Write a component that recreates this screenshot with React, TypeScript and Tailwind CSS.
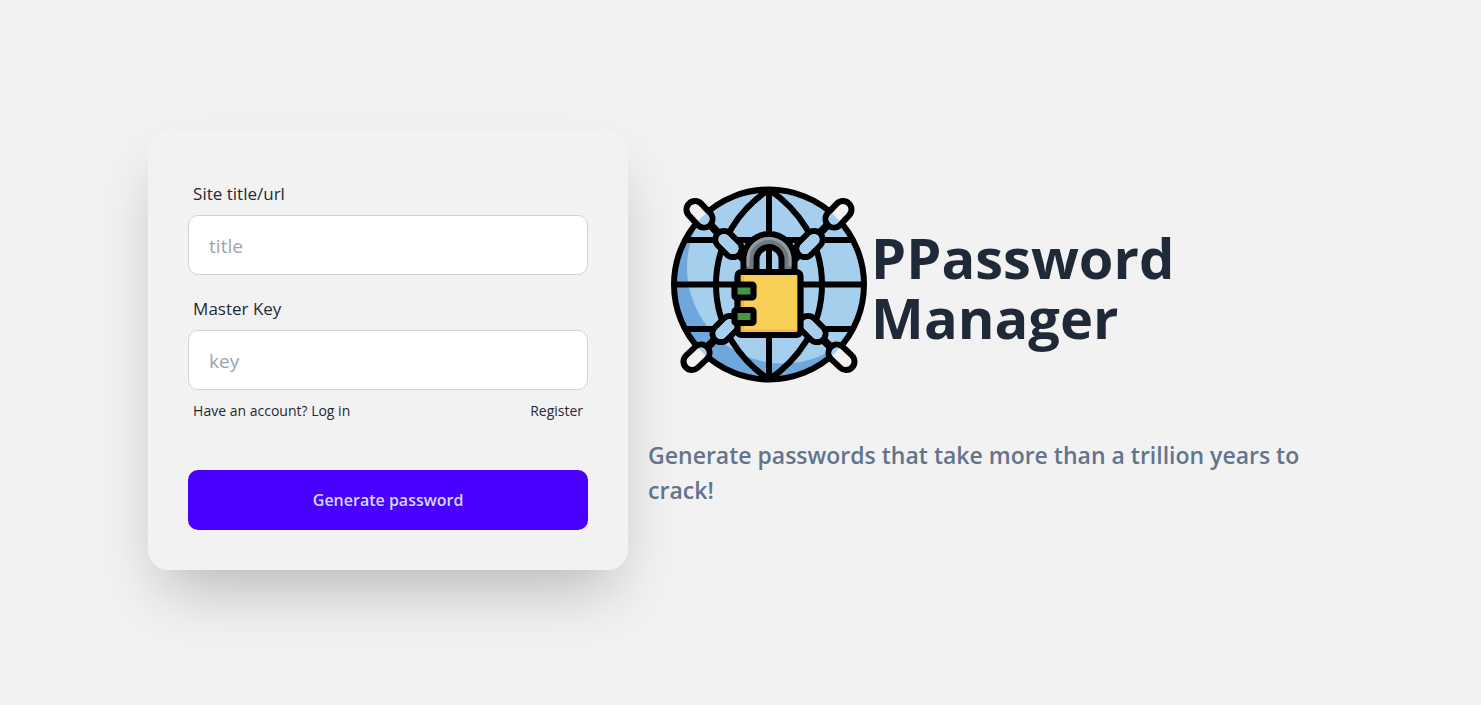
import React from "react";

type Point = [number, number];

const links: { id: string; from: Point; to: Point }[] = [
  { id: "top-left-outer", from: [-74, -75], to: [-65, -65.5] },
  { id: "top-left-inner", from: [-45, -45], to: [-36, -36] },
  { id: "top-right-outer", from: [74, -75], to: [65, -65.5] },
  { id: "top-right-inner", from: [45, -45], to: [36, -36] },
  { id: "bottom-left-outer", from: [-77, 77], to: [-68, 68.5] },
  { id: "bottom-left-inner", from: [-48, 49], to: [-39, 40] },
  { id: "bottom-right-outer", from: [77, 77], to: [68, 68.5] },
  { id: "bottom-right-inner", from: [48, 49], to: [39, 40] },
];

function Links({ width, color }: { width: number; color: string }) {
  return (
    <g stroke={color} strokeWidth={width} strokeLinecap="round">
      {links.map(({ id, from, to }) => (
        <line key={id} x1={from[0]} y1={from[1]} x2={to[0]} y2={to[1]} />
      ))}
    </g>
  );
}

function GlobeLock() {
  return (
    <svg viewBox="-121 -112.5 223 226" className="h-[226px] w-[223px] shrink-0" fill="none" role="img" aria-label="Chained globe with a padlock">
      <defs>
        <clipPath id="globe">
          <circle r="95" />
        </clipPath>
      </defs>
      <circle r="95" fill="#6fa6dc" />
      <circle cx="14" cy="-17" r="96" fill="#a6cfee" clipPath="url(#globe)" />
      <g stroke="#000" strokeWidth="6">
        <circle r="95" />
        <path d="M0-95V95M-95 0H95M-84-44.5H84M-84 44.5H84" />
        <path d="M0-95C-28-76-53-44-53 0S-28 76 0 95M0-95C28-76 53-44 53 0S28 76 0 95" />
        <path d="M-62-63L-25-25M62-63L25-25M-62 63L-30 31M62 63L30 31" strokeWidth="8" />
      </g>
      <Links width={23} color="#000" />
      <Links width={11} color="#f2f2f2" />
      <g clipPath="url(#globe)">
        <Links width={11} color="#a6cfee" />
      </g>
      <path d="M-19-12V-25A19 19 0 0 1 19-25V-12" stroke="#000" strokeWidth="19" />
      <path d="M-19-12V-25A19 19 0 0 1 19-25V-12" stroke="#6f7980" strokeWidth="7" />
      <path d="M-21-18V-25A21 21 0 0 1 21-25V-18" stroke="#959a9f" strokeWidth="3" />
      <rect x="-31.5" y="-12.5" width="63" height="63" rx="4" fill="#f8d057" />
      <path d="M-29-11V49H29V45H-25V-11Z" fill="#f5b544" />
      <rect x="-31.5" y="-12.5" width="63" height="63" rx="4" stroke="#000" strokeWidth="6.2" />
      <rect x="-34.5" y="0" width="19" height="13" rx="1.5" fill="#459644" stroke="#000" strokeWidth="6.2" />
      <rect x="-34.5" y="25.5" width="19" height="13" rx="1.5" fill="#459644" stroke="#000" strokeWidth="6.2" />
    </svg>
  );
}

function Field({ id, label, placeholder, type }: { id: string; label: string; placeholder: string; type: string }) {
  return (
    <div className="flex flex-col">
      <label htmlFor={id} className="px-[5px] pt-[11px] pb-[9px] text-[17px] leading-[25px]">
        {label}
      </label>
      <input
        id={id}
        type={type}
        placeholder={placeholder}
        className="h-[60px] rounded-[10px] border border-[#d2d3d6] bg-white px-5 pt-0.5 text-[19px] outline-none placeholder:text-[#9ca3af]"
      />
    </div>
  );
}

export default function App() {
  return (
    <div className="flex min-h-screen items-center justify-center bg-[#f2f2f2] pb-[5px] font-['Open_Sans','Noto_Sans',sans-serif] text-[#1f2937]">
      <main className="flex w-4/5 items-center gap-5">
        <form
          onSubmit={(event) => event.preventDefault()}
          className="flex w-[480px] shrink-0 flex-col rounded-[20px] bg-[#f2f2f2] p-10 shadow-[0_31px_63px_-15px_rgba(0,0,0,0.25)]"
        >
          <Field id="site" label="Site title/url" placeholder="title" type="text" />
          <div className="mt-2.5">
            <Field id="key" label="Master Key" placeholder="key" type="password" />
          </div>
          <div className="flex justify-between px-[5px] pt-[11px] pb-[9px] text-[14px] leading-5">
            <a href="#login">Have an account? Log in</a>
            <a href="#register">Register</a>
          </div>
          <button type="submit" className="mt-10 h-[60px] rounded-[10px] bg-[#4a00ff] text-[16px] font-semibold text-[#d1dbff]">
            Generate password
          </button>
        </form>
        <section className="min-w-0 flex-1">
          <div className="flex items-center">
            <GlobeLock />
            <h1 className="pt-1 text-[56px] leading-[60px] font-bold">PPassword Manager</h1>
          </div>
          <p className="mt-10 mb-5 text-[23px] leading-[35px] font-semibold text-[#64748b]">
            Generate passwords that take more than a trillion years to crack!
          </p>
        </section>
      </main>
    </div>
  );
}
